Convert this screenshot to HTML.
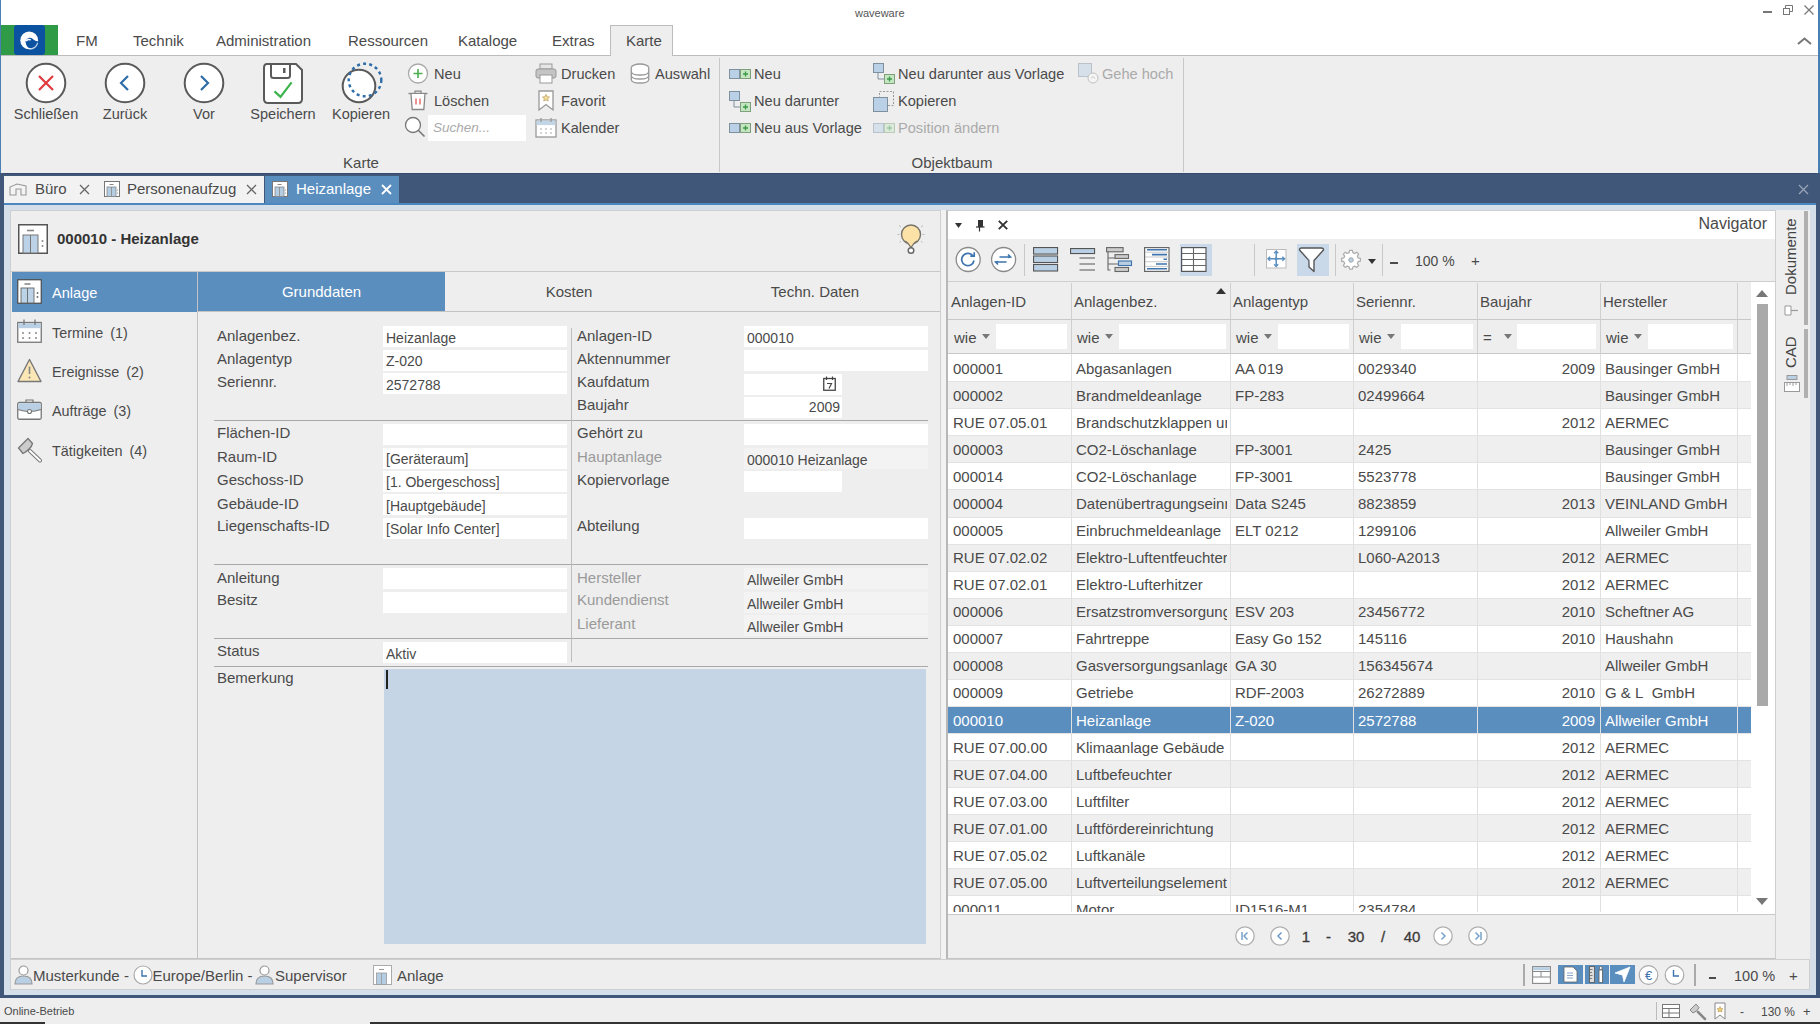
<!DOCTYPE html>
<html><head><meta charset="utf-8">
<style>
*{box-sizing:border-box;margin:0;padding:0}
html,body{width:1820px;height:1024px;overflow:hidden;background:#eeeeee;font-family:"Liberation Sans",sans-serif;color:#444}
.a{position:absolute;white-space:nowrap}
svg.a{overflow:visible}
</style></head><body>

<div class="a" style="left:0px;top:0px;width:1820px;height:25px;background:#fff;"></div>
<div class="a" style="left:0px;top:25px;width:1820px;height:31px;background:#fff;"></div>
<div class="a" style="left:0px;top:55px;width:1820px;height:1px;background:#bcbcbc;"></div>
<div class="a " style="left:855px;top:6.0px;font-size:11px;line-height:14px;color:#555;font-weight:normal;">waveware</div>
<div class="a" style="left:1763px;top:11px;width:9px;height:2px;background:#777;"></div>
<svg class="a" style="left:1783px;top:5px" width="10" height="10" viewBox="0 0 10 10"><rect x="0.5" y="3.5" width="6" height="6" fill="none" stroke="#777"/><path d="M2.5 3.5V0.5h7v6h-3" fill="none" stroke="#777"/></svg>
<svg class="a" style="left:1804px;top:5px" width="10" height="10" viewBox="0 0 10 10"><path d="M0.5 0.5L9.5 9.5M9.5 0.5L0.5 9.5" stroke="#777" stroke-width="1.2"/></svg>
<svg class="a" style="left:1797px;top:37px" width="15" height="8" viewBox="0 0 15 8"><path d="M1 7L7.5 1.5L14 7" fill="none" stroke="#777" stroke-width="2"/></svg>
<div class="a" style="left:0px;top:0px;width:1px;height:173px;background:#4a7fb5;"></div>
<div class="a" style="left:1818px;top:0px;width:2px;height:173px;background:#4a7fb5;"></div>
<div class="a" style="left:1px;top:25px;width:57px;height:30px;background:#2f9b47;"></div>
<div class="a" style="left:14px;top:25px;width:31px;height:30px;background:#0b52a0;border-radius:3px"></div>
<svg class="a" style="left:19px;top:30px" width="22" height="22" viewBox="0 0 22 22"><circle cx="10.2" cy="10.4" r="8.9" fill="#fff"/><path d="M6.5 11.5C7.5 8 11 6.6 13.5 8.8C15.5 10.5 17.5 11.8 19 11.2C18.6 15 15.5 18.2 11.5 18.2C9 18.2 7 16 6.5 11.5Z" fill="#0b52a0"/><path d="M7.2 11.2C8.2 9.5 10 9 11.6 10" fill="none" stroke="#fff" stroke-width="1.6"/><path d="M18.6 13C17.5 16.8 14.5 19 10.5 19.2" fill="none" stroke="#bcd3ea" stroke-width="1.1"/></svg>
<div class="a " style="left:76px;top:31.0px;font-size:15px;line-height:20px;color:#4a4a4a;font-weight:normal;">FM</div>
<div class="a " style="left:133px;top:31.0px;font-size:15px;line-height:20px;color:#4a4a4a;font-weight:normal;">Technik</div>
<div class="a " style="left:216px;top:31.0px;font-size:15px;line-height:20px;color:#4a4a4a;font-weight:normal;">Administration</div>
<div class="a " style="left:348px;top:31.0px;font-size:15px;line-height:20px;color:#4a4a4a;font-weight:normal;">Ressourcen</div>
<div class="a " style="left:458px;top:31.0px;font-size:15px;line-height:20px;color:#4a4a4a;font-weight:normal;">Kataloge</div>
<div class="a " style="left:552px;top:31.0px;font-size:15px;line-height:20px;color:#4a4a4a;font-weight:normal;">Extras</div>
<div class="a" style="left:610px;top:25px;width:63px;height:31px;background:#eeeeee;border:1px solid #bcbcbc;border-bottom:none"></div>
<div class="a " style="left:626px;top:31.0px;font-size:15px;line-height:20px;color:#4a4a4a;font-weight:normal;">Karte</div>
<div class="a" style="left:1px;top:56px;width:1817px;height:116px;background:#eeeeee;"></div>
<div class="a" style="left:719px;top:58px;width:1px;height:114px;background:#c8c8c8;"></div>
<div class="a" style="left:1183px;top:58px;width:1px;height:114px;background:#c8c8c8;"></div>
<div class="a" style="left:261.0px;top:153.0px;width:200px;text-align:center;font-size:15px;line-height:20px;color:#4a4a4a;font-weight:normal;">Karte</div>
<div class="a" style="left:852.0px;top:153.0px;width:200px;text-align:center;font-size:15px;line-height:20px;color:#4a4a4a;font-weight:normal;">Objektbaum</div>
<svg class="a" style="left:25px;top:62px" width="42" height="42" viewBox="0 0 42 42"><circle cx="21" cy="21" r="19.3" fill="#fff" stroke="#5a5a5a" stroke-width="2"/><path d="M14 14L28 28M28 14L14 28" stroke="#e03a3f" stroke-width="2.2"/></svg>
<div class="a" style="left:-54.0px;top:104.0px;width:200px;text-align:center;font-size:14.5px;line-height:20px;color:#4a4a4a;font-weight:normal;">Schließen</div>
<svg class="a" style="left:104px;top:62px" width="42" height="42" viewBox="0 0 42 42"><circle cx="21" cy="21" r="19.3" fill="#fff" stroke="#5a5a5a" stroke-width="2"/><path d="M24 14L17 21L24 28" fill="none" stroke="#2e6da8" stroke-width="2.2"/></svg>
<div class="a" style="left:25.0px;top:104.0px;width:200px;text-align:center;font-size:14.5px;line-height:20px;color:#4a4a4a;font-weight:normal;">Zurück</div>
<svg class="a" style="left:183px;top:62px" width="42" height="42" viewBox="0 0 42 42"><circle cx="21" cy="21" r="19.3" fill="#fff" stroke="#5a5a5a" stroke-width="2"/><path d="M18 14L25 21L18 28" fill="none" stroke="#2e6da8" stroke-width="2.2"/></svg>
<div class="a" style="left:104.0px;top:104.0px;width:200px;text-align:center;font-size:14.5px;line-height:20px;color:#4a4a4a;font-weight:normal;">Vor</div>
<svg class="a" style="left:263px;top:63px" width="40" height="41" viewBox="0 0 40 41"><path d="M4 1H33L39 7V36Q39 40 35 40H5Q1 40 1 36V5Q1 1 4 1Z" fill="#fff" stroke="#5a5a5a" stroke-width="2"/><path d="M8 1.5V12.5Q8 15 10.5 15H24.5Q27 15 27 12.5V1.5" fill="none" stroke="#5a5a5a" stroke-width="2"/><rect x="20" y="5" width="2.5" height="5" fill="#5a5a5a"/><path d="M11.5 28.4L17.5 33.8L28.6 19.4" fill="none" stroke="#3cb44b" stroke-width="2.2"/></svg>
<div class="a" style="left:183.0px;top:104.0px;width:200px;text-align:center;font-size:14.5px;line-height:20px;color:#4a4a4a;font-weight:normal;">Speichern</div>
<svg class="a" style="left:340px;top:62px" width="44" height="44" viewBox="0 0 44 44"><circle cx="19" cy="24" r="16.3" fill="#fff" stroke="#5a5a5a" stroke-width="2"/><circle cx="25" cy="18" r="16.3" fill="none" stroke="#2e6da8" stroke-width="2.4" stroke-dasharray="3 3.2"/></svg>
<div class="a" style="left:261.0px;top:104.0px;width:200px;text-align:center;font-size:14.5px;line-height:20px;color:#4a4a4a;font-weight:normal;">Kopieren</div>
<svg class="a" style="left:407px;top:63px" width="22" height="22" viewBox="0 0 22 22"><circle cx="11" cy="10.5" r="9.5" fill="#fff" stroke="#aaa" stroke-width="1.3"/><path d="M11 6V15M6.5 10.5H15.5" stroke="#4caf50" stroke-width="1.6"/></svg>
<div class="a " style="left:434px;top:64.0px;font-size:14.6px;line-height:20px;color:#4a4a4a;font-weight:normal;">Neu</div>
<svg class="a" style="left:407px;top:90px" width="22" height="21" viewBox="0 0 22 21"><path d="M1.5 3.5H20.5" stroke="#888" stroke-width="1.4"/><path d="M8 3.5V1.2H14V3.5" fill="none" stroke="#888" stroke-width="1.2"/><path d="M4 4L5.2 19.5H16.8L18 4" fill="#fff" stroke="#888" stroke-width="1.3"/><path d="M9 8.5V14.5M13 8.5V14.5" stroke="#e05a5a" stroke-width="1.3"/></svg>
<div class="a " style="left:434px;top:91.0px;font-size:14.6px;line-height:20px;color:#4a4a4a;font-weight:normal;">Löschen</div>
<svg class="a" style="left:404px;top:116px" width="22" height="22" viewBox="0 0 22 22"><circle cx="9" cy="9" r="7.5" fill="#fff" stroke="#777" stroke-width="1.3"/><path d="M14.5 14.5L20.5 20.5" stroke="#777" stroke-width="1.6"/></svg>
<div class="a" style="left:428px;top:115px;width:98px;height:26px;background:#fff;"></div>
<div class="a " style="left:433px;top:118.0px;font-size:13.5px;line-height:20px;color:#aaa;font-weight:normal;font-style:italic">Suchen...</div>
<svg class="a" style="left:535px;top:63px" width="22" height="21" viewBox="0 0 22 21"><rect x="5" y="1" width="12" height="5" fill="#e6e6e6" stroke="#999"/><rect x="1" y="6" width="20" height="9" rx="2" fill="#c4c4c4" stroke="#999"/><rect x="5" y="12" width="12" height="8" fill="#fff" stroke="#999"/></svg>
<div class="a " style="left:561px;top:64.0px;font-size:14.6px;line-height:20px;color:#4a4a4a;font-weight:normal;">Drucken</div>
<svg class="a" style="left:538px;top:90px" width="16" height="21" viewBox="0 0 16 21"><path d="M1 1H15V20L8 14.5L1 20Z" fill="#fff" stroke="#999" stroke-width="1.3"/><path d="M8 4.5L9.1 6.8L11.5 7L9.7 8.6L10.2 11L8 9.8L5.8 11L6.3 8.6L4.5 7L6.9 6.8Z" fill="#f3dca0" stroke="#b89a50" stroke-width="0.7"/></svg>
<div class="a " style="left:561px;top:91.0px;font-size:14.6px;line-height:20px;color:#4a4a4a;font-weight:normal;">Favorit</div>
<svg class="a" style="left:535px;top:117px" width="22" height="21" viewBox="0 0 22 21"><rect x="1" y="3" width="20" height="17" fill="#fff" stroke="#999" stroke-width="1.3"/><rect x="1.6" y="3.6" width="18.8" height="4.5" fill="#c2d6e8"/><path d="M6 1V5M16 1V5" stroke="#999" stroke-width="1.3"/><path d="M5 12h2M10 12h2M15 12h2M5 16h2M10 16h2M15 16h2" stroke="#aaa" stroke-width="1.2"/></svg>
<div class="a " style="left:561px;top:118.0px;font-size:14.6px;line-height:20px;color:#4a4a4a;font-weight:normal;">Kalender</div>
<svg class="a" style="left:630px;top:63px" width="20" height="21" viewBox="0 0 20 21"><ellipse cx="10" cy="4.5" rx="8.7" ry="3.5" fill="#fff" stroke="#999" stroke-width="1.3"/><path d="M1.3 4.5V16.5C1.3 18.5 5 20 10 20S18.7 18.5 18.7 16.5V4.5" fill="#fff" stroke="#999" stroke-width="1.3"/><path d="M1.3 8.5C1.3 10.5 5 12 10 12S18.7 10.5 18.7 8.5M1.3 12.5C1.3 14.5 5 16 10 16S18.7 14.5 18.7 12.5" fill="none" stroke="#999" stroke-width="1.3"/></svg>
<div class="a " style="left:655px;top:64.0px;font-size:14.6px;line-height:20px;color:#4a4a4a;font-weight:normal;">Auswahl</div>
<svg class="a" style="left:729px;top:68px" width="22" height="12" viewBox="0 0 22 12"><g opacity="1.0"><rect x="0.5" y="1.5" width="10" height="9" fill="#b9d0e6" stroke="#7e8f9e"/><rect x="11.5" y="1.5" width="10" height="9" fill="#c6e6c3" stroke="#7ea07a"/><path d="M16.5 3.5V8.5M14 6H19" stroke="#3a9a45" stroke-width="1.3"/></g></svg>
<div class="a " style="left:754px;top:64.0px;font-size:14.6px;line-height:20px;color:#4a4a4a;font-weight:normal;">Neu</div>
<svg class="a" style="left:729px;top:91px" width="22" height="22" viewBox="0 0 22 22"><g opacity="1.0"><rect x="0.5" y="0.5" width="10" height="9" fill="#b9d0e6" stroke="#7e8f9e"/><path d="M5 10V16H11" fill="none" stroke="#7e8f9e"/><rect x="11.5" y="11.5" width="10" height="9" fill="#c6e6c3" stroke="#7ea07a"/><path d="M16.5 13.5V18.5M14 16H19" stroke="#3a9a45" stroke-width="1.3"/></g></svg>
<div class="a " style="left:754px;top:91.0px;font-size:14.6px;line-height:20px;color:#4a4a4a;font-weight:normal;">Neu darunter</div>
<svg class="a" style="left:729px;top:122px" width="22" height="12" viewBox="0 0 22 12"><g opacity="1.0"><rect x="0.5" y="1.5" width="10" height="9" fill="#b9d0e6" stroke="#7e8f9e"/><rect x="11.5" y="1.5" width="10" height="9" fill="#c6e6c3" stroke="#7ea07a"/><path d="M16.5 3.5V8.5M14 6H19" stroke="#3a9a45" stroke-width="1.3"/></g></svg>
<div class="a " style="left:754px;top:118.0px;font-size:14.6px;line-height:20px;color:#4a4a4a;font-weight:normal;">Neu aus Vorlage</div>
<svg class="a" style="left:873px;top:63px" width="22" height="22" viewBox="0 0 22 22"><g opacity="1.0"><rect x="0.5" y="0.5" width="10" height="9" fill="#b9d0e6" stroke="#7e8f9e"/><path d="M5 10V16H11" fill="none" stroke="#7e8f9e"/><rect x="11.5" y="11.5" width="10" height="9" fill="#c6e6c3" stroke="#7ea07a"/><path d="M16.5 13.5V18.5M14 16H19" stroke="#3a9a45" stroke-width="1.3"/></g></svg>
<div class="a " style="left:898px;top:64.0px;font-size:14.6px;line-height:20px;color:#4a4a4a;font-weight:normal;">Neu darunter aus Vorlage</div>
<svg class="a" style="left:873px;top:91px" width="22" height="21" viewBox="0 0 22 21"><rect x="6.5" y="0.5" width="14" height="14" fill="none" stroke="#999" stroke-dasharray="2 1.5"/><rect x="0.5" y="6.5" width="14" height="14" fill="#b9d0e6" stroke="#7e8f9e"/></svg>
<div class="a " style="left:898px;top:91.0px;font-size:14.6px;line-height:20px;color:#4a4a4a;font-weight:normal;">Kopieren</div>
<svg class="a" style="left:873px;top:122px" width="22" height="12" viewBox="0 0 22 12"><g opacity="0.45"><rect x="0.5" y="1.5" width="10" height="9" fill="#b9d0e6" stroke="#7e8f9e"/><rect x="11.5" y="1.5" width="10" height="9" fill="#c6e6c3" stroke="#7ea07a"/><path d="M16.5 3.5V8.5M14 6H19" stroke="#3a9a45" stroke-width="1.3"/></g></svg>
<div class="a " style="left:898px;top:118.0px;font-size:14.6px;line-height:20px;color:#aaa;font-weight:normal;">Position ändern</div>
<svg class="a" style="left:1078px;top:63px" width="22" height="22" viewBox="0 0 22 22"><g opacity="0.45"><rect x="0.5" y="0.5" width="13" height="13" fill="#b9d0e6" stroke="#7e8f9e"/><circle cx="15" cy="15" r="5" fill="#fff" stroke="#888"/><path d="M13 15.5L15 13.5L17 15.5" fill="none" stroke="#888"/></g></svg>
<div class="a " style="left:1102px;top:64.0px;font-size:14.6px;line-height:20px;color:#aaa;font-weight:normal;">Gehe hoch</div>
<div class="a" style="left:0px;top:173px;width:1820px;height:30px;background:#41577a;"></div>
<div class="a" style="left:0px;top:173px;width:1820px;height:1px;background:#34496b;"></div>
<div class="a" style="left:0px;top:203px;width:1820px;height:2px;background:#4d87bf;"></div>
<div class="a" style="left:0px;top:205px;width:1820px;height:5px;background:#d5dfe9;"></div>
<div class="a" style="left:4px;top:176px;width:260px;height:27px;background:#f2f2f2;"></div>
<svg class="a" style="left:9px;top:183px" width="18" height="13" viewBox="0 0 18 13"><path d="M1 12V4L8 1L17 3V12H12V6H7V12Z" fill="#f4f4f4" stroke="#999" stroke-width="1.1"/></svg>
<div class="a " style="left:35px;top:179.0px;font-size:15px;line-height:20px;color:#4a4a4a;font-weight:normal;">Büro</div>
<svg class="a" style="left:79px;top:184px" width="11" height="11" viewBox="0 0 11 11"><path d="M1 1L10 10M10 1L1 10" stroke="#666" stroke-width="1.3"/></svg>
<svg class="a" style="left:104px;top:181px" width="16" height="16" viewBox="0 0 16 16"><rect x="0.5" y="0.5" width="15" height="15" fill="#fff" stroke="#777"/><rect x="3" y="6" width="9" height="9.5" fill="#b5cde2" stroke="#888" stroke-width="0.8"/><path d="M7.5 6V15.5" stroke="#888" stroke-width="0.8"/><path d="M5.5 3.5H9.5" stroke="#888"/><circle cx="13.5" cy="9" r="0.6" fill="#888"/><circle cx="13.5" cy="12" r="0.6" fill="#888"/></svg>
<div class="a " style="left:127px;top:179.0px;font-size:15px;line-height:20px;color:#4a4a4a;font-weight:normal;">Personenaufzug</div>
<svg class="a" style="left:246px;top:184px" width="11" height="11" viewBox="0 0 11 11"><path d="M1 1L10 10M10 1L1 10" stroke="#666" stroke-width="1.3"/></svg>
<div class="a" style="left:265px;top:176px;width:134px;height:27px;background:#5a8ebf;"></div>
<svg class="a" style="left:272px;top:181px" width="16" height="16" viewBox="0 0 16 16"><rect x="0.5" y="0.5" width="15" height="15" fill="#fff" stroke="#777"/><rect x="3" y="6" width="9" height="9.5" fill="#b5cde2" stroke="#888" stroke-width="0.8"/><path d="M7.5 6V15.5" stroke="#888" stroke-width="0.8"/><path d="M5.5 3.5H9.5" stroke="#888"/><circle cx="13.5" cy="9" r="0.6" fill="#888"/><circle cx="13.5" cy="12" r="0.6" fill="#888"/></svg>
<div class="a " style="left:296px;top:179.0px;font-size:15px;line-height:20px;color:#fff;font-weight:normal;">Heizanlage</div>
<svg class="a" style="left:381px;top:184px" width="11" height="11" viewBox="0 0 11 11"><path d="M1 1L10 10M10 1L1 10" stroke="#fff" stroke-width="1.8"/></svg>
<svg class="a" style="left:1798px;top:184px" width="11" height="11" viewBox="0 0 11 11"><path d="M1 1L10 10M10 1L1 10" stroke="#9aa6b8" stroke-width="1.2"/></svg>
<div class="a" style="left:0px;top:173px;width:4px;height:825px;background:#41577a;"></div>
<div class="a" style="left:1816px;top:173px;width:4px;height:825px;background:#41577a;"></div>
<div class="a" style="left:4px;top:210px;width:6px;height:785px;background:#d5dfe9;"></div>
<div class="a" style="left:1810px;top:210px;width:6px;height:785px;background:#d5dfe9;"></div>
<div class="a" style="left:10px;top:210px;width:931px;height:750px;background:#eeeeee;border:1px solid #cfcfcf;border-bottom:2px solid #c4c4c4"></div>
<svg class="a" style="left:18px;top:224px" width="30" height="30" viewBox="0 0 30 30"><rect x="0.75" y="0.75" width="28.5" height="28.5" fill="#fff" stroke="#555" stroke-width="1.5"/><rect x="5" y="11" width="15" height="18" fill="#bcd2e6" stroke="#777" stroke-width="1"/><path d="M12.5 11V29" stroke="#777" stroke-width="1"/><path d="M9 6.5H16" stroke="#888" stroke-width="1.6"/><circle cx="24.5" cy="17" r="1" fill="#888"/><circle cx="24.5" cy="22" r="1" fill="#888"/></svg>
<div class="a " style="left:57px;top:229.0px;font-size:15px;line-height:20px;color:#333;font-weight:bold;">000010 - Heizanlage</div>
<svg class="a" style="left:896px;top:222px" width="30" height="34" viewBox="0 0 30 34"><circle cx="15" cy="12.5" r="9.5" fill="#fde2a8" stroke="#77736a" stroke-width="1.4"/><path d="M10 19.5L15 25L20 19.5" fill="#fde2a8" stroke="none"/><path d="M9.3 19Q13 21.5 15 25.5Q17 21.5 20.7 19" fill="none" stroke="#77736a" stroke-width="1.3"/><circle cx="15" cy="28.5" r="2.8" fill="#fff" stroke="#666" stroke-width="1.4"/><g stroke="#bbb" stroke-width="1"><path d="M3 3.5L5 5M27 3.5L25 5M1.5 12.5H3.5M26.5 12.5H28.5M3.5 20.5L5 19M26.5 20.5L25 19"/></g></svg>
<div class="a" style="left:11px;top:271px;width:929px;height:1px;background:#c8c8c8;"></div>
<div class="a" style="left:12px;top:272px;width:185px;height:40px;background:#5a8ebf;"></div>
<div class="a" style="left:197px;top:272px;width:1px;height:686px;background:#c3c3c3;"></div>
<svg class="a" style="left:17px;top:279px" width="25" height="25" viewBox="0 0 25 25"><rect x="0.75" y="0.75" width="23.5" height="23.5" fill="#fff" stroke="#4a4a4a" stroke-width="1.2"/><rect x="4" y="9" width="13" height="15" fill="#bcd2e6" stroke="#666" stroke-width="0.9"/><path d="M10.5 9V24" stroke="#666" stroke-width="0.9"/><path d="M7.5 5H13.5" stroke="#777" stroke-width="1.4"/><circle cx="20.5" cy="14" r="0.9" fill="#666"/><circle cx="20.5" cy="18" r="0.9" fill="#666"/></svg>
<div class="a " style="left:52px;top:283.0px;font-size:14.6px;line-height:20px;color:#fff;font-weight:normal;">Anlage</div>
<svg class="a" style="left:17px;top:319px" width="25" height="24" viewBox="0 0 25 24"><rect x="0.75" y="3.5" width="23.5" height="19.75" fill="#fff" stroke="#777" stroke-width="1.3"/><rect x="1.4" y="4.2" width="22.2" height="5" fill="#b9cfe3"/><path d="M7 0.5V6M18 0.5V6" stroke="#777" stroke-width="1.3"/><g fill="#888"><circle cx="6" cy="14" r="1"/><circle cx="12.5" cy="14" r="1"/><circle cx="19" cy="14" r="1"/><circle cx="6" cy="19" r="1"/><circle cx="12.5" cy="19" r="1"/><circle cx="19" cy="19" r="1"/></g></svg>
<div class="a " style="left:52px;top:323.0px;font-size:14.4px;line-height:20px;color:#4a4a4a;font-weight:normal;">Termine<span style="margin-left:3px"> (1)</span></div>
<svg class="a" style="left:17px;top:358px" width="25" height="25" viewBox="0 0 25 25"><path d="M12.5 1.5L24 23.5H1Z" fill="#fbe7b5" stroke="#777" stroke-width="1.4" stroke-linejoin="round"/><path d="M12.5 8.5V16" stroke="#888" stroke-width="1.6"/><circle cx="12.5" cy="19.5" r="1" fill="#888"/></svg>
<div class="a " style="left:52px;top:362.0px;font-size:14.4px;line-height:20px;color:#4a4a4a;font-weight:normal;">Ereignisse<span style="margin-left:3px"> (2)</span></div>
<svg class="a" style="left:17px;top:399px" width="25" height="21" viewBox="0 0 25 21"><rect x="0.75" y="3.5" width="23.5" height="16.75" rx="1.5" fill="#fff" stroke="#777" stroke-width="1.3"/><path d="M1.3 4.2H23.6V10.5Q12.5 14.5 1.3 10.5Z" fill="#b9cfe3"/><path d="M1 10.5Q12.5 14.5 24 10.5" fill="none" stroke="#777" stroke-width="1.2"/><path d="M9 3.5V1H16V3.5" fill="none" stroke="#777" stroke-width="1.2"/><circle cx="12.5" cy="12.5" r="2" fill="#fff" stroke="#777" stroke-width="1.1"/></svg>
<div class="a " style="left:52px;top:401.0px;font-size:14.4px;line-height:20px;color:#4a4a4a;font-weight:normal;">Aufträge<span style="margin-left:3px"> (3)</span></div>
<svg class="a" style="left:17px;top:437px" width="25" height="25" viewBox="0 0 25 25"><path d="M13 14L23 23.5" stroke="#777" stroke-width="4" stroke-linecap="round"/><path d="M13 14L23 23.5" stroke="#fff" stroke-width="2" stroke-linecap="round"/><path d="M1.5 11L11 1.5L15.5 6.5Q14 12 6 16.5Z" fill="#ccc" stroke="#777" stroke-width="1.3" stroke-linejoin="round"/></svg>
<div class="a " style="left:52px;top:441.0px;font-size:14.4px;line-height:20px;color:#4a4a4a;font-weight:normal;">Tätigkeiten<span style="margin-left:3px"> (4)</span></div>
<div class="a" style="left:198px;top:272px;width:247px;height:40px;background:#5a8ebf;"></div>
<div class="a" style="left:198px;top:311px;width:742px;height:1px;background:#c3c3c3;"></div>
<div class="a" style="left:221.5px;top:282.0px;width:200px;text-align:center;font-size:15px;line-height:20px;color:#fff;font-weight:normal;">Grunddaten</div>
<div class="a" style="left:469.0px;top:282.0px;width:200px;text-align:center;font-size:15px;line-height:20px;color:#4a4a4a;font-weight:normal;">Kosten</div>
<div class="a" style="left:715.0px;top:282.0px;width:200px;text-align:center;font-size:15px;line-height:20px;color:#4a4a4a;font-weight:normal;">Techn. Daten</div>
<div class="a" style="left:214px;top:420px;width:714px;height:1px;background:#a9a9a9;"></div>
<div class="a" style="left:214px;top:564px;width:714px;height:1px;background:#a9a9a9;"></div>
<div class="a" style="left:214px;top:638px;width:714px;height:1px;background:#a9a9a9;"></div>
<div class="a" style="left:214px;top:666px;width:714px;height:1px;background:#a9a9a9;"></div>
<div class="a" style="left:571px;top:328px;width:1px;height:334px;background:#bdbdbd;"></div>
<div class="a " style="left:217px;top:325.8px;font-size:15px;line-height:20px;color:#4a4a4a;font-weight:normal;">Anlagenbez.</div>
<div class="a" style="left:383px;top:326px;width:184px;height:21px;background:#fff;"></div>
<div class="a " style="left:386px;top:327.5px;font-size:14px;line-height:20px;color:#4a4a4a;font-weight:normal;">Heizanlage</div>
<div class="a " style="left:217px;top:349.3px;font-size:15px;line-height:20px;color:#4a4a4a;font-weight:normal;">Anlagentyp</div>
<div class="a" style="left:383px;top:350px;width:184px;height:21px;background:#fff;"></div>
<div class="a " style="left:386px;top:351.2px;font-size:14px;line-height:20px;color:#4a4a4a;font-weight:normal;">Z-020</div>
<div class="a " style="left:217px;top:372.2px;font-size:15px;line-height:20px;color:#4a4a4a;font-weight:normal;">Seriennr.</div>
<div class="a" style="left:383px;top:373px;width:184px;height:21px;background:#fff;"></div>
<div class="a " style="left:386px;top:374.7px;font-size:14px;line-height:20px;color:#4a4a4a;font-weight:normal;">2572788</div>
<div class="a " style="left:217px;top:423.3px;font-size:15px;line-height:20px;color:#4a4a4a;font-weight:normal;">Flächen-ID</div>
<div class="a" style="left:383px;top:424px;width:184px;height:21px;background:#fff;"></div>
<div class="a " style="left:217px;top:446.6px;font-size:15px;line-height:20px;color:#4a4a4a;font-weight:normal;">Raum-ID</div>
<div class="a" style="left:383px;top:448px;width:184px;height:21px;background:#fff;"></div>
<div class="a " style="left:386px;top:449.2px;font-size:14px;line-height:20px;color:#4a4a4a;font-weight:normal;">[Geräteraum]</div>
<div class="a " style="left:217px;top:470.0px;font-size:15px;line-height:20px;color:#4a4a4a;font-weight:normal;">Geschoss-ID</div>
<div class="a" style="left:383px;top:471px;width:184px;height:21px;background:#fff;"></div>
<div class="a " style="left:386px;top:472.3px;font-size:14px;line-height:20px;color:#4a4a4a;font-weight:normal;">[1. Obergeschoss]</div>
<div class="a " style="left:217px;top:493.5px;font-size:15px;line-height:20px;color:#4a4a4a;font-weight:normal;">Gebäude-ID</div>
<div class="a" style="left:383px;top:494px;width:184px;height:21px;background:#fff;"></div>
<div class="a " style="left:386px;top:495.5px;font-size:14px;line-height:20px;color:#4a4a4a;font-weight:normal;">[Hauptgebäude]</div>
<div class="a " style="left:217px;top:516.4px;font-size:15px;line-height:20px;color:#4a4a4a;font-weight:normal;">Liegenschafts-ID</div>
<div class="a" style="left:383px;top:518px;width:184px;height:21px;background:#fff;"></div>
<div class="a " style="left:386px;top:519.3px;font-size:14px;line-height:20px;color:#4a4a4a;font-weight:normal;">[Solar Info Center]</div>
<div class="a " style="left:217px;top:567.6px;font-size:15px;line-height:20px;color:#4a4a4a;font-weight:normal;">Anleitung</div>
<div class="a" style="left:383px;top:568px;width:184px;height:21px;background:#fff;"></div>
<div class="a " style="left:217px;top:590.0px;font-size:15px;line-height:20px;color:#4a4a4a;font-weight:normal;">Besitz</div>
<div class="a" style="left:383px;top:592px;width:184px;height:21px;background:#fff;"></div>
<div class="a " style="left:217px;top:641.3px;font-size:15px;line-height:20px;color:#4a4a4a;font-weight:normal;">Status</div>
<div class="a" style="left:383px;top:642px;width:184px;height:21px;background:#fff;"></div>
<div class="a " style="left:386px;top:643.5px;font-size:14px;line-height:20px;color:#4a4a4a;font-weight:normal;">Aktiv</div>
<div class="a " style="left:577px;top:325.7px;font-size:15px;line-height:20px;color:#4a4a4a;font-weight:normal;">Anlagen-ID</div>
<div class="a" style="left:744px;top:326px;width:184px;height:21px;background:#fff;"></div>
<div class="a " style="left:747px;top:327.5px;font-size:14px;line-height:20px;color:#4a4a4a;font-weight:normal;">000010</div>
<div class="a " style="left:577px;top:349.3px;font-size:15px;line-height:20px;color:#4a4a4a;font-weight:normal;">Aktennummer</div>
<div class="a" style="left:744px;top:350px;width:184px;height:21px;background:#fff;"></div>
<div class="a " style="left:577px;top:372.3px;font-size:15px;line-height:20px;color:#4a4a4a;font-weight:normal;">Kaufdatum</div>
<div class="a" style="left:744px;top:374px;width:98px;height:21px;background:#fff;"></div>
<div class="a " style="left:577px;top:395.2px;font-size:15px;line-height:20px;color:#4a4a4a;font-weight:normal;">Baujahr</div>
<div class="a" style="left:744px;top:397px;width:98px;height:21px;background:#fff;"></div>
<div class="a " style="left:577px;top:423.3px;font-size:15px;line-height:20px;color:#4a4a4a;font-weight:normal;">Gehört zu</div>
<div class="a" style="left:744px;top:424px;width:184px;height:21px;background:#fff;"></div>
<div class="a " style="left:577px;top:446.6px;font-size:15px;line-height:20px;color:#9a9a9a;font-weight:normal;">Hauptanlage</div>
<div class="a" style="left:744px;top:448px;width:184px;height:21px;background:#f3f3f3;"></div>
<div class="a " style="left:747px;top:449.5px;font-size:14px;line-height:20px;color:#4a4a4a;font-weight:normal;">000010 Heizanlage</div>
<div class="a " style="left:577px;top:470.0px;font-size:15px;line-height:20px;color:#4a4a4a;font-weight:normal;">Kopiervorlage</div>
<div class="a" style="left:744px;top:471px;width:98px;height:21px;background:#fff;"></div>
<div class="a " style="left:577px;top:516.4px;font-size:15px;line-height:20px;color:#4a4a4a;font-weight:normal;">Abteilung</div>
<div class="a" style="left:744px;top:518px;width:184px;height:21px;background:#fff;"></div>
<div class="a " style="left:577px;top:567.6px;font-size:15px;line-height:20px;color:#9a9a9a;font-weight:normal;">Hersteller</div>
<div class="a" style="left:744px;top:568px;width:184px;height:21px;background:#f3f3f3;"></div>
<div class="a " style="left:747px;top:569.5px;font-size:14px;line-height:20px;color:#4a4a4a;font-weight:normal;">Allweiler GmbH</div>
<div class="a " style="left:577px;top:590.0px;font-size:15px;line-height:20px;color:#9a9a9a;font-weight:normal;">Kundendienst</div>
<div class="a" style="left:744px;top:592px;width:184px;height:21px;background:#f3f3f3;"></div>
<div class="a " style="left:747px;top:593.5px;font-size:14px;line-height:20px;color:#4a4a4a;font-weight:normal;">Allweiler GmbH</div>
<div class="a " style="left:577px;top:614.0px;font-size:15px;line-height:20px;color:#9a9a9a;font-weight:normal;">Lieferant</div>
<div class="a" style="left:744px;top:615px;width:184px;height:21px;background:#f3f3f3;"></div>
<div class="a " style="left:747px;top:616.5px;font-size:14px;line-height:20px;color:#4a4a4a;font-weight:normal;">Allweiler GmbH</div>
<div class="a" style="left:640px;top:397.0px;width:200px;text-align:right;font-size:14px;line-height:20px;color:#4a4a4a;">2009</div>
<svg class="a" style="left:823px;top:376px" width="13" height="15" viewBox="0 0 13 15"><rect x="0.75" y="2.5" width="11.5" height="11.75" fill="#fff" stroke="#444" stroke-width="1.3"/><path d="M3.5 0.5V4M9.5 0.5V4" stroke="#444" stroke-width="1.2"/><path d="M4 7.5H8.5L6 12.5" fill="none" stroke="#444" stroke-width="1.2"/></svg>
<div class="a " style="left:217px;top:668.0px;font-size:15px;line-height:20px;color:#4a4a4a;font-weight:normal;">Bemerkung</div>
<div class="a" style="left:384px;top:669px;width:542px;height:275px;background:#c5d5e5;"></div>
<div class="a" style="left:386px;top:670px;width:2px;height:19px;background:#222;"></div>
<div class="a" style="left:941px;top:210px;width:6px;height:750px;background:#f2f2f2;"></div>
<div class="a" style="left:946px;top:210px;width:830px;height:750px;background:#eeeeee;border:1px solid #cfcfcf;border-left:2px solid #b8b8b8;border-bottom:2px solid #c4c4c4"></div>
<div class="a" style="left:948px;top:211px;width:827px;height:28px;background:#fff;"></div>
<svg class="a" style="left:955px;top:223px" width="7" height="5" viewBox="0 0 7 5"><path d="M0 0H7L3.5 5Z" fill="#333"/></svg>
<svg class="a" style="left:975px;top:219px" width="10" height="13" viewBox="0 0 10 13"><path d="M3 1H8V8H3Z" fill="#333"/><path d="M1 8H9.5" stroke="#333" stroke-width="1.2"/><path d="M4.5 8V12.5" stroke="#333" stroke-width="1.2"/></svg>
<svg class="a" style="left:998px;top:220px" width="10" height="10" viewBox="0 0 10 10"><path d="M0.8 0.8L9.2 9.2M9.2 0.8L0.8 9.2" stroke="#333" stroke-width="1.9"/></svg>
<div class="a" style="left:1567px;top:214.0px;width:200px;text-align:right;font-size:16px;line-height:20px;color:#4a4a4a;">Navigator</div>
<svg class="a" style="left:955px;top:247px" width="27" height="26" viewBox="0 0 27 26"><circle cx="13.2" cy="12.5" r="12" fill="#fff" stroke="#8a8a8a" stroke-width="1.3"/><path d="M18.2 9.3A6.2 6.2 0 1 0 19 13.5" fill="none" stroke="#3d74ad" stroke-width="1.7"/><path d="M15.3 9.2H19.2V5.3" fill="none" stroke="#3d74ad" stroke-width="1.7"/></svg>
<svg class="a" style="left:990px;top:247px" width="27" height="26" viewBox="0 0 27 26"><circle cx="13.6" cy="12.5" r="12" fill="#fff" stroke="#8a8a8a" stroke-width="1.3"/><path d="M9.5 10H20.5M18 7.5L20.5 10L18 10.5" fill="none" stroke="#3d74ad" stroke-width="1.6"/><path d="M16.5 15H5.5M8 17.5L5.5 15L8 14.5" fill="none" stroke="#3d74ad" stroke-width="1.6"/></svg>
<div class="a" style="left:1024px;top:244px;width:1px;height:32px;background:#c8c8c8;"></div>
<svg class="a" style="left:1033px;top:247px" width="26" height="25" viewBox="0 0 26 25"><g fill="#b9cfe3" stroke="#555" stroke-width="1.1"><rect x="0.55" y="0.55" width="24" height="6.5"/><rect x="0.55" y="9" width="24" height="6.5"/><rect x="0.55" y="17.5" width="24" height="6.5"/></g></svg>
<svg class="a" style="left:1070px;top:248px" width="26" height="24" viewBox="0 0 26 24"><rect x="0.55" y="0.55" width="24" height="5" fill="#b9cfe3" stroke="#555" stroke-width="1.1"/><path d="M9.5 10H25M9.5 16H25M9.5 22H25" stroke="#888" stroke-width="1.3"/></svg>
<svg class="a" style="left:1106px;top:247px" width="27" height="26" viewBox="0 0 27 26"><path d="M2 5V23H4.5M2 11H9M2 17H12" fill="none" stroke="#666" stroke-width="1.1"/><g stroke="#666" stroke-width="1.1" fill="#ccc"><rect x="0.6" y="0.6" width="16.5" height="4.2"/><rect x="9" y="7.6" width="13.5" height="3.8"/><rect x="9" y="20.5" width="13.5" height="4"/></g><rect x="12.5" y="14" width="13" height="4.5" fill="#b9cfe3" stroke="#3d74ad" stroke-width="1.1"/></svg>
<svg class="a" style="left:1144px;top:247px" width="26" height="25" viewBox="0 0 26 25"><rect x="0.6" y="0.6" width="24.4" height="23.8" fill="#fff" stroke="#666" stroke-width="1.2"/><path d="M1 5.2H25M1 10H25M1 14.7H25M1 19.4H25" stroke="#bbb" stroke-width="0.8"/><path d="M3 2.8H23M8 7.6H23M19.5 12.3H23M12 17H23M3 21.8H23" stroke="#3d74ad" stroke-width="1.6"/></svg>
<div class="a" style="left:1180px;top:244px;width:32px;height:32px;background:#c9d9ea;"></div>
<svg class="a" style="left:1181px;top:247px" width="26" height="25" viewBox="0 0 26 25"><rect x="0.6" y="0.6" width="24.4" height="23.8" fill="#fff" stroke="#555" stroke-width="1.2"/><path d="M1 6.5H25M1 12.5H25M1 18.5H25M12.5 1V24" stroke="#666" stroke-width="1.1"/></svg>
<div class="a" style="left:1254px;top:244px;width:1px;height:32px;background:#c8c8c8;"></div>
<svg class="a" style="left:1266px;top:249px" width="21" height="20" viewBox="0 0 21 20"><rect x="0.5" y="0.5" width="19.5" height="18.5" fill="#fff" stroke="#bbb"/><path d="M10.2 2V17.5M2 9.7H18.5" stroke="#5a8ebf" stroke-width="1.5"/><path d="M8.2 4.2L10.2 2L12.2 4.2M8.2 15.3L10.2 17.5L12.2 15.3M4.2 7.7L2 9.7L4.2 11.7M16.3 7.7L18.5 9.7L16.3 11.7" fill="none" stroke="#5a8ebf" stroke-width="1.4"/><circle cx="10.2" cy="9.7" r="1.5" fill="#5a8ebf"/></svg>
<div class="a" style="left:1297px;top:244px;width:32px;height:32px;background:#c9d9ea;"></div>
<svg class="a" style="left:1298px;top:247px" width="27" height="25" viewBox="0 0 27 25"><path d="M1.5 3Q1.5 1 3.5 1H23.5Q25.5 1 25.5 3L16 13.5V24.5L11 20V13.5Z" fill="#fff" stroke="#555" stroke-width="1.4" stroke-linejoin="round"/><path d="M3 2.5L11 13V19.5L11.5 12.5Z" fill="#c9d9ea"/></svg>
<div class="a" style="left:1335px;top:244px;width:1px;height:32px;background:#c8c8c8;"></div>
<svg class="a" style="left:1341px;top:250px" width="20" height="20" viewBox="0 0 20 20"><g transform="translate(10 10)"><path d="M-1.6 -9.2H1.6L2.2 -6.6L4.4 -5.6L6.7 -7.1L8.9 -4.9L7.4 -2.6L8.3 -0.4L10.9 0.1V3.3L8.3 3.9L7.4 6.1L8.9 8.4L6.7 10.6L4.4 9.1L2.2 10.1L1.6 12.7H-1.6L-2.2 10.1L-4.4 9.1L-6.7 10.6L-8.9 8.4L-7.4 6.1L-8.3 3.9L-10.9 3.3V0.1L-8.3 -0.4L-7.4 -2.6L-8.9 -4.9L-6.7 -7.1L-4.4 -5.6L-2.2 -6.6Z" transform="translate(0 -1.7) scale(0.86)" fill="#fff" stroke="#aaa" stroke-width="1.4" stroke-linejoin="round"/><circle cx="0" cy="0" r="2.3" fill="#b9cfe3" stroke="#999" stroke-width="0.8"/></g></svg>
<svg class="a" style="left:1368px;top:259px" width="8" height="5" viewBox="0 0 8 5"><path d="M0 0H8L4 5Z" fill="#333"/></svg>
<div class="a" style="left:1382px;top:244px;width:1px;height:32px;background:#c8c8c8;"></div>
<div class="a" style="left:1390px;top:262px;width:8px;height:1.5px;background:#4a4a4a;"></div>
<div class="a " style="left:1415px;top:250.5px;font-size:14px;line-height:20px;color:#4a4a4a;font-weight:normal;">100 %</div>
<div class="a " style="left:1471px;top:251.0px;font-size:15px;line-height:20px;color:#4a4a4a;font-weight:normal;">+</div>
<div class="a" style="left:948px;top:281px;width:827px;height:1px;background:#cfcfcf;"></div>
<div class="a" style="left:948px;top:282px;width:803px;height:72px;background:#eeeeee;"></div>
<div class="a" style="left:948px;top:319px;width:803px;height:1px;background:#c8c8c8;"></div>
<div class="a" style="left:948px;top:353px;width:803px;height:1px;background:#c8c8c8;"></div>
<div class="a" style="left:1071px;top:283px;width:1px;height:71px;background:#cfcfcf;"></div>
<div class="a" style="left:1230px;top:283px;width:1px;height:71px;background:#cfcfcf;"></div>
<div class="a" style="left:1353px;top:283px;width:1px;height:71px;background:#cfcfcf;"></div>
<div class="a" style="left:1477px;top:283px;width:1px;height:71px;background:#cfcfcf;"></div>
<div class="a" style="left:1600px;top:283px;width:1px;height:71px;background:#cfcfcf;"></div>
<div class="a" style="left:1737px;top:283px;width:1px;height:71px;background:#cfcfcf;"></div>
<div class="a" style="left:1751px;top:283px;width:1px;height:71px;background:#cfcfcf;"></div>
<div class="a " style="left:951px;top:291.5px;font-size:15px;line-height:20px;color:#4a4a4a;font-weight:normal;">Anlagen-ID</div>
<div class="a " style="left:1074px;top:291.5px;font-size:15px;line-height:20px;color:#4a4a4a;font-weight:normal;">Anlagenbez.</div>
<div class="a " style="left:1233px;top:291.5px;font-size:15px;line-height:20px;color:#4a4a4a;font-weight:normal;">Anlagentyp</div>
<div class="a " style="left:1356px;top:291.5px;font-size:15px;line-height:20px;color:#4a4a4a;font-weight:normal;">Seriennr.</div>
<div class="a " style="left:1480px;top:291.5px;font-size:15px;line-height:20px;color:#4a4a4a;font-weight:normal;">Baujahr</div>
<div class="a " style="left:1603px;top:291.5px;font-size:15px;line-height:20px;color:#4a4a4a;font-weight:normal;">Hersteller</div>
<svg class="a" style="left:1216px;top:288px" width="10" height="6" viewBox="0 0 10 6"><path d="M0 6H10L5 0Z" fill="#333"/></svg>
<div class="a " style="left:954px;top:328.0px;font-size:15px;line-height:20px;color:#4a4a4a;font-weight:normal;">wie</div>
<svg class="a" style="left:982px;top:334px" width="8" height="5" viewBox="0 0 8 5"><path d="M0 0H8L4 5Z" fill="#777"/></svg>
<div class="a" style="left:996px;top:324px;width:71px;height:25px;background:#fff;"></div>
<div class="a " style="left:1077px;top:328.0px;font-size:15px;line-height:20px;color:#4a4a4a;font-weight:normal;">wie</div>
<svg class="a" style="left:1105px;top:334px" width="8" height="5" viewBox="0 0 8 5"><path d="M0 0H8L4 5Z" fill="#777"/></svg>
<div class="a" style="left:1119px;top:324px;width:107px;height:25px;background:#fff;"></div>
<div class="a " style="left:1236px;top:328.0px;font-size:15px;line-height:20px;color:#4a4a4a;font-weight:normal;">wie</div>
<svg class="a" style="left:1264px;top:334px" width="8" height="5" viewBox="0 0 8 5"><path d="M0 0H8L4 5Z" fill="#777"/></svg>
<div class="a" style="left:1278px;top:324px;width:71px;height:25px;background:#fff;"></div>
<div class="a " style="left:1359px;top:328.0px;font-size:15px;line-height:20px;color:#4a4a4a;font-weight:normal;">wie</div>
<svg class="a" style="left:1387px;top:334px" width="8" height="5" viewBox="0 0 8 5"><path d="M0 0H8L4 5Z" fill="#777"/></svg>
<div class="a" style="left:1401px;top:324px;width:72px;height:25px;background:#fff;"></div>
<div class="a " style="left:1483px;top:328.0px;font-size:15px;line-height:20px;color:#4a4a4a;font-weight:normal;">=</div>
<svg class="a" style="left:1504px;top:334px" width="8" height="5" viewBox="0 0 8 5"><path d="M0 0H8L4 5Z" fill="#777"/></svg>
<div class="a" style="left:1517px;top:324px;width:79px;height:25px;background:#fff;"></div>
<div class="a " style="left:1606px;top:328.0px;font-size:15px;line-height:20px;color:#4a4a4a;font-weight:normal;">wie</div>
<svg class="a" style="left:1634px;top:334px" width="8" height="5" viewBox="0 0 8 5"><path d="M0 0H8L4 5Z" fill="#777"/></svg>
<div class="a" style="left:1648px;top:324px;width:85px;height:25px;background:#fff;"></div>
<div class="a" style="left:948px;top:354px;width:803px;height:558px;overflow:hidden;background:#fff">
<div class="a" style="left:0;top:1.10px;width:803px;height:27.07px;background:#fff;border-bottom:1px solid #e3e3e3"></div>
<div class="a" style="left:5px;top:4.63px;width:115px;overflow:hidden;font-size:15px;line-height:20px;color:#4a4a4a">000001</div>
<div class="a" style="left:128px;top:4.63px;width:151px;overflow:hidden;font-size:15px;line-height:20px;color:#4a4a4a">Abgasanlagen</div>
<div class="a" style="left:287px;top:4.63px;width:115px;overflow:hidden;font-size:15px;line-height:20px;color:#4a4a4a">AA 019</div>
<div class="a" style="left:410px;top:4.63px;width:116px;overflow:hidden;font-size:15px;line-height:20px;color:#4a4a4a">0029340</div>
<div class="a" style="left:529px;top:4.63px;width:118px;text-align:right;font-size:15px;line-height:20px;color:#4a4a4a">2009</div>
<div class="a" style="left:657px;top:4.63px;width:129px;overflow:hidden;font-size:15px;line-height:20px;color:#4a4a4a">Bausinger GmbH</div>
<div class="a" style="left:0;top:28.17px;width:803px;height:27.07px;background:#efefef;border-bottom:1px solid #e3e3e3"></div>
<div class="a" style="left:5px;top:31.70px;width:115px;overflow:hidden;font-size:15px;line-height:20px;color:#4a4a4a">000002</div>
<div class="a" style="left:128px;top:31.70px;width:151px;overflow:hidden;font-size:15px;line-height:20px;color:#4a4a4a">Brandmeldeanlage</div>
<div class="a" style="left:287px;top:31.70px;width:115px;overflow:hidden;font-size:15px;line-height:20px;color:#4a4a4a">FP-283</div>
<div class="a" style="left:410px;top:31.70px;width:116px;overflow:hidden;font-size:15px;line-height:20px;color:#4a4a4a">02499664</div>
<div class="a" style="left:657px;top:31.70px;width:129px;overflow:hidden;font-size:15px;line-height:20px;color:#4a4a4a">Bausinger GmbH</div>
<div class="a" style="left:0;top:55.24px;width:803px;height:27.07px;background:#fff;border-bottom:1px solid #e3e3e3"></div>
<div class="a" style="left:5px;top:58.78px;width:115px;overflow:hidden;font-size:15px;line-height:20px;color:#4a4a4a">RUE 07.05.01</div>
<div class="a" style="left:128px;top:58.78px;width:151px;overflow:hidden;font-size:15px;line-height:20px;color:#4a4a4a">Brandschutzklappen und</div>
<div class="a" style="left:529px;top:58.78px;width:118px;text-align:right;font-size:15px;line-height:20px;color:#4a4a4a">2012</div>
<div class="a" style="left:657px;top:58.78px;width:129px;overflow:hidden;font-size:15px;line-height:20px;color:#4a4a4a">AERMEC</div>
<div class="a" style="left:0;top:82.31px;width:803px;height:27.07px;background:#efefef;border-bottom:1px solid #e3e3e3"></div>
<div class="a" style="left:5px;top:85.84px;width:115px;overflow:hidden;font-size:15px;line-height:20px;color:#4a4a4a">000003</div>
<div class="a" style="left:128px;top:85.84px;width:151px;overflow:hidden;font-size:15px;line-height:20px;color:#4a4a4a">CO2-Löschanlage</div>
<div class="a" style="left:287px;top:85.84px;width:115px;overflow:hidden;font-size:15px;line-height:20px;color:#4a4a4a">FP-3001</div>
<div class="a" style="left:410px;top:85.84px;width:116px;overflow:hidden;font-size:15px;line-height:20px;color:#4a4a4a">2425</div>
<div class="a" style="left:657px;top:85.84px;width:129px;overflow:hidden;font-size:15px;line-height:20px;color:#4a4a4a">Bausinger GmbH</div>
<div class="a" style="left:0;top:109.38px;width:803px;height:27.07px;background:#fff;border-bottom:1px solid #e3e3e3"></div>
<div class="a" style="left:5px;top:112.91px;width:115px;overflow:hidden;font-size:15px;line-height:20px;color:#4a4a4a">000014</div>
<div class="a" style="left:128px;top:112.91px;width:151px;overflow:hidden;font-size:15px;line-height:20px;color:#4a4a4a">CO2-Löschanlage</div>
<div class="a" style="left:287px;top:112.91px;width:115px;overflow:hidden;font-size:15px;line-height:20px;color:#4a4a4a">FP-3001</div>
<div class="a" style="left:410px;top:112.91px;width:116px;overflow:hidden;font-size:15px;line-height:20px;color:#4a4a4a">5523778</div>
<div class="a" style="left:657px;top:112.91px;width:129px;overflow:hidden;font-size:15px;line-height:20px;color:#4a4a4a">Bausinger GmbH</div>
<div class="a" style="left:0;top:136.45px;width:803px;height:27.07px;background:#efefef;border-bottom:1px solid #e3e3e3"></div>
<div class="a" style="left:5px;top:139.98px;width:115px;overflow:hidden;font-size:15px;line-height:20px;color:#4a4a4a">000004</div>
<div class="a" style="left:128px;top:139.98px;width:151px;overflow:hidden;font-size:15px;line-height:20px;color:#4a4a4a">Datenübertragungseinrichtung</div>
<div class="a" style="left:287px;top:139.98px;width:115px;overflow:hidden;font-size:15px;line-height:20px;color:#4a4a4a">Data S245</div>
<div class="a" style="left:410px;top:139.98px;width:116px;overflow:hidden;font-size:15px;line-height:20px;color:#4a4a4a">8823859</div>
<div class="a" style="left:529px;top:139.98px;width:118px;text-align:right;font-size:15px;line-height:20px;color:#4a4a4a">2013</div>
<div class="a" style="left:657px;top:139.98px;width:129px;overflow:hidden;font-size:15px;line-height:20px;color:#4a4a4a">VEINLAND GmbH</div>
<div class="a" style="left:0;top:163.52px;width:803px;height:27.07px;background:#fff;border-bottom:1px solid #e3e3e3"></div>
<div class="a" style="left:5px;top:167.06px;width:115px;overflow:hidden;font-size:15px;line-height:20px;color:#4a4a4a">000005</div>
<div class="a" style="left:128px;top:167.06px;width:151px;overflow:hidden;font-size:15px;line-height:20px;color:#4a4a4a">Einbruchmeldeanlage</div>
<div class="a" style="left:287px;top:167.06px;width:115px;overflow:hidden;font-size:15px;line-height:20px;color:#4a4a4a">ELT 0212</div>
<div class="a" style="left:410px;top:167.06px;width:116px;overflow:hidden;font-size:15px;line-height:20px;color:#4a4a4a">1299106</div>
<div class="a" style="left:657px;top:167.06px;width:129px;overflow:hidden;font-size:15px;line-height:20px;color:#4a4a4a">Allweiler GmbH</div>
<div class="a" style="left:0;top:190.59px;width:803px;height:27.07px;background:#efefef;border-bottom:1px solid #e3e3e3"></div>
<div class="a" style="left:5px;top:194.12px;width:115px;overflow:hidden;font-size:15px;line-height:20px;color:#4a4a4a">RUE 07.02.02</div>
<div class="a" style="left:128px;top:194.12px;width:151px;overflow:hidden;font-size:15px;line-height:20px;color:#4a4a4a">Elektro-Luftentfeuchter</div>
<div class="a" style="left:410px;top:194.12px;width:116px;overflow:hidden;font-size:15px;line-height:20px;color:#4a4a4a">L060-A2013</div>
<div class="a" style="left:529px;top:194.12px;width:118px;text-align:right;font-size:15px;line-height:20px;color:#4a4a4a">2012</div>
<div class="a" style="left:657px;top:194.12px;width:129px;overflow:hidden;font-size:15px;line-height:20px;color:#4a4a4a">AERMEC</div>
<div class="a" style="left:0;top:217.66px;width:803px;height:27.07px;background:#fff;border-bottom:1px solid #e3e3e3"></div>
<div class="a" style="left:5px;top:221.19px;width:115px;overflow:hidden;font-size:15px;line-height:20px;color:#4a4a4a">RUE 07.02.01</div>
<div class="a" style="left:128px;top:221.19px;width:151px;overflow:hidden;font-size:15px;line-height:20px;color:#4a4a4a">Elektro-Lufterhitzer</div>
<div class="a" style="left:529px;top:221.19px;width:118px;text-align:right;font-size:15px;line-height:20px;color:#4a4a4a">2012</div>
<div class="a" style="left:657px;top:221.19px;width:129px;overflow:hidden;font-size:15px;line-height:20px;color:#4a4a4a">AERMEC</div>
<div class="a" style="left:0;top:244.73px;width:803px;height:27.07px;background:#efefef;border-bottom:1px solid #e3e3e3"></div>
<div class="a" style="left:5px;top:248.26px;width:115px;overflow:hidden;font-size:15px;line-height:20px;color:#4a4a4a">000006</div>
<div class="a" style="left:128px;top:248.26px;width:151px;overflow:hidden;font-size:15px;line-height:20px;color:#4a4a4a">Ersatzstromversorgung</div>
<div class="a" style="left:287px;top:248.26px;width:115px;overflow:hidden;font-size:15px;line-height:20px;color:#4a4a4a">ESV 203</div>
<div class="a" style="left:410px;top:248.26px;width:116px;overflow:hidden;font-size:15px;line-height:20px;color:#4a4a4a">23456772</div>
<div class="a" style="left:529px;top:248.26px;width:118px;text-align:right;font-size:15px;line-height:20px;color:#4a4a4a">2010</div>
<div class="a" style="left:657px;top:248.26px;width:129px;overflow:hidden;font-size:15px;line-height:20px;color:#4a4a4a">Scheftner AG</div>
<div class="a" style="left:0;top:271.80px;width:803px;height:27.07px;background:#fff;border-bottom:1px solid #e3e3e3"></div>
<div class="a" style="left:5px;top:275.34px;width:115px;overflow:hidden;font-size:15px;line-height:20px;color:#4a4a4a">000007</div>
<div class="a" style="left:128px;top:275.34px;width:151px;overflow:hidden;font-size:15px;line-height:20px;color:#4a4a4a">Fahrtreppe</div>
<div class="a" style="left:287px;top:275.34px;width:115px;overflow:hidden;font-size:15px;line-height:20px;color:#4a4a4a">Easy Go 152</div>
<div class="a" style="left:410px;top:275.34px;width:116px;overflow:hidden;font-size:15px;line-height:20px;color:#4a4a4a">145116</div>
<div class="a" style="left:529px;top:275.34px;width:118px;text-align:right;font-size:15px;line-height:20px;color:#4a4a4a">2010</div>
<div class="a" style="left:657px;top:275.34px;width:129px;overflow:hidden;font-size:15px;line-height:20px;color:#4a4a4a">Haushahn</div>
<div class="a" style="left:0;top:298.87px;width:803px;height:27.07px;background:#efefef;border-bottom:1px solid #e3e3e3"></div>
<div class="a" style="left:5px;top:302.41px;width:115px;overflow:hidden;font-size:15px;line-height:20px;color:#4a4a4a">000008</div>
<div class="a" style="left:128px;top:302.41px;width:151px;overflow:hidden;font-size:15px;line-height:20px;color:#4a4a4a">Gasversorgungsanlage</div>
<div class="a" style="left:287px;top:302.41px;width:115px;overflow:hidden;font-size:15px;line-height:20px;color:#4a4a4a">GA 30</div>
<div class="a" style="left:410px;top:302.41px;width:116px;overflow:hidden;font-size:15px;line-height:20px;color:#4a4a4a">156345674</div>
<div class="a" style="left:657px;top:302.41px;width:129px;overflow:hidden;font-size:15px;line-height:20px;color:#4a4a4a">Allweiler GmbH</div>
<div class="a" style="left:0;top:325.94px;width:803px;height:27.07px;background:#fff;border-bottom:1px solid #e3e3e3"></div>
<div class="a" style="left:5px;top:329.48px;width:115px;overflow:hidden;font-size:15px;line-height:20px;color:#4a4a4a">000009</div>
<div class="a" style="left:128px;top:329.48px;width:151px;overflow:hidden;font-size:15px;line-height:20px;color:#4a4a4a">Getriebe</div>
<div class="a" style="left:287px;top:329.48px;width:115px;overflow:hidden;font-size:15px;line-height:20px;color:#4a4a4a">RDF-2003</div>
<div class="a" style="left:410px;top:329.48px;width:116px;overflow:hidden;font-size:15px;line-height:20px;color:#4a4a4a">26272889</div>
<div class="a" style="left:529px;top:329.48px;width:118px;text-align:right;font-size:15px;line-height:20px;color:#4a4a4a">2010</div>
<div class="a" style="left:657px;top:329.48px;width:129px;overflow:hidden;font-size:15px;line-height:20px;color:#4a4a4a">G &amp; L&nbsp; GmbH</div>
<div class="a" style="left:0;top:353.01px;width:803px;height:27.07px;background:#5a8ebf;border-bottom:1px solid #e3e3e3"></div>
<div class="a" style="left:5px;top:356.55px;width:115px;overflow:hidden;font-size:15px;line-height:20px;color:#fff">000010</div>
<div class="a" style="left:128px;top:356.55px;width:151px;overflow:hidden;font-size:15px;line-height:20px;color:#fff">Heizanlage</div>
<div class="a" style="left:287px;top:356.55px;width:115px;overflow:hidden;font-size:15px;line-height:20px;color:#fff">Z-020</div>
<div class="a" style="left:410px;top:356.55px;width:116px;overflow:hidden;font-size:15px;line-height:20px;color:#fff">2572788</div>
<div class="a" style="left:529px;top:356.55px;width:118px;text-align:right;font-size:15px;line-height:20px;color:#fff">2009</div>
<div class="a" style="left:657px;top:356.55px;width:129px;overflow:hidden;font-size:15px;line-height:20px;color:#fff">Allweiler GmbH</div>
<div class="a" style="left:0;top:380.08px;width:803px;height:27.07px;background:#fff;border-bottom:1px solid #e3e3e3"></div>
<div class="a" style="left:5px;top:383.62px;width:115px;overflow:hidden;font-size:15px;line-height:20px;color:#4a4a4a">RUE 07.00.00</div>
<div class="a" style="left:128px;top:383.62px;width:151px;overflow:hidden;font-size:15px;line-height:20px;color:#4a4a4a">Klimaanlage Gebäude</div>
<div class="a" style="left:529px;top:383.62px;width:118px;text-align:right;font-size:15px;line-height:20px;color:#4a4a4a">2012</div>
<div class="a" style="left:657px;top:383.62px;width:129px;overflow:hidden;font-size:15px;line-height:20px;color:#4a4a4a">AERMEC</div>
<div class="a" style="left:0;top:407.15px;width:803px;height:27.07px;background:#efefef;border-bottom:1px solid #e3e3e3"></div>
<div class="a" style="left:5px;top:410.69px;width:115px;overflow:hidden;font-size:15px;line-height:20px;color:#4a4a4a">RUE 07.04.00</div>
<div class="a" style="left:128px;top:410.69px;width:151px;overflow:hidden;font-size:15px;line-height:20px;color:#4a4a4a">Luftbefeuchter</div>
<div class="a" style="left:529px;top:410.69px;width:118px;text-align:right;font-size:15px;line-height:20px;color:#4a4a4a">2012</div>
<div class="a" style="left:657px;top:410.69px;width:129px;overflow:hidden;font-size:15px;line-height:20px;color:#4a4a4a">AERMEC</div>
<div class="a" style="left:0;top:434.22px;width:803px;height:27.07px;background:#fff;border-bottom:1px solid #e3e3e3"></div>
<div class="a" style="left:5px;top:437.76px;width:115px;overflow:hidden;font-size:15px;line-height:20px;color:#4a4a4a">RUE 07.03.00</div>
<div class="a" style="left:128px;top:437.76px;width:151px;overflow:hidden;font-size:15px;line-height:20px;color:#4a4a4a">Luftfilter</div>
<div class="a" style="left:529px;top:437.76px;width:118px;text-align:right;font-size:15px;line-height:20px;color:#4a4a4a">2012</div>
<div class="a" style="left:657px;top:437.76px;width:129px;overflow:hidden;font-size:15px;line-height:20px;color:#4a4a4a">AERMEC</div>
<div class="a" style="left:0;top:461.29px;width:803px;height:27.07px;background:#efefef;border-bottom:1px solid #e3e3e3"></div>
<div class="a" style="left:5px;top:464.83px;width:115px;overflow:hidden;font-size:15px;line-height:20px;color:#4a4a4a">RUE 07.01.00</div>
<div class="a" style="left:128px;top:464.83px;width:151px;overflow:hidden;font-size:15px;line-height:20px;color:#4a4a4a">Luftfördereinrichtung</div>
<div class="a" style="left:529px;top:464.83px;width:118px;text-align:right;font-size:15px;line-height:20px;color:#4a4a4a">2012</div>
<div class="a" style="left:657px;top:464.83px;width:129px;overflow:hidden;font-size:15px;line-height:20px;color:#4a4a4a">AERMEC</div>
<div class="a" style="left:0;top:488.36px;width:803px;height:27.07px;background:#fff;border-bottom:1px solid #e3e3e3"></div>
<div class="a" style="left:5px;top:491.90px;width:115px;overflow:hidden;font-size:15px;line-height:20px;color:#4a4a4a">RUE 07.05.02</div>
<div class="a" style="left:128px;top:491.90px;width:151px;overflow:hidden;font-size:15px;line-height:20px;color:#4a4a4a">Luftkanäle</div>
<div class="a" style="left:529px;top:491.90px;width:118px;text-align:right;font-size:15px;line-height:20px;color:#4a4a4a">2012</div>
<div class="a" style="left:657px;top:491.90px;width:129px;overflow:hidden;font-size:15px;line-height:20px;color:#4a4a4a">AERMEC</div>
<div class="a" style="left:0;top:515.43px;width:803px;height:27.07px;background:#efefef;border-bottom:1px solid #e3e3e3"></div>
<div class="a" style="left:5px;top:518.97px;width:115px;overflow:hidden;font-size:15px;line-height:20px;color:#4a4a4a">RUE 07.05.00</div>
<div class="a" style="left:128px;top:518.97px;width:151px;overflow:hidden;font-size:15px;line-height:20px;color:#4a4a4a">Luftverteilungselement</div>
<div class="a" style="left:529px;top:518.97px;width:118px;text-align:right;font-size:15px;line-height:20px;color:#4a4a4a">2012</div>
<div class="a" style="left:657px;top:518.97px;width:129px;overflow:hidden;font-size:15px;line-height:20px;color:#4a4a4a">AERMEC</div>
<div class="a" style="left:0;top:542.50px;width:803px;height:27.07px;background:#fff;border-bottom:1px solid #e3e3e3"></div>
<div class="a" style="left:5px;top:546.03px;width:115px;overflow:hidden;font-size:15px;line-height:20px;color:#4a4a4a">000011</div>
<div class="a" style="left:128px;top:546.03px;width:151px;overflow:hidden;font-size:15px;line-height:20px;color:#4a4a4a">Motor</div>
<div class="a" style="left:287px;top:546.03px;width:115px;overflow:hidden;font-size:15px;line-height:20px;color:#4a4a4a">ID1516-M1</div>
<div class="a" style="left:410px;top:546.03px;width:116px;overflow:hidden;font-size:15px;line-height:20px;color:#4a4a4a">2354784</div>
<div class="a" style="left:123px;top:0;width:1px;height:560px;background:#e0e0e0"></div>
<div class="a" style="left:282px;top:0;width:1px;height:560px;background:#e0e0e0"></div>
<div class="a" style="left:405px;top:0;width:1px;height:560px;background:#e0e0e0"></div>
<div class="a" style="left:529px;top:0;width:1px;height:560px;background:#e0e0e0"></div>
<div class="a" style="left:652px;top:0;width:1px;height:560px;background:#e0e0e0"></div>
<div class="a" style="left:789px;top:0;width:1px;height:560px;background:#e0e0e0"></div>
</div>
<div class="a" style="left:1751px;top:282px;width:24px;height:632px;background:#fff;"></div>
<div class="a" style="left:948px;top:912px;width:803px;height:2px;background:#fff;"></div>
<svg class="a" style="left:1756px;top:290px" width="12" height="7" viewBox="0 0 12 7"><path d="M0 7H12L6 0Z" fill="#777"/></svg>
<div class="a" style="left:1757px;top:304px;width:11px;height:402px;background:#a9a9a9;"></div>
<svg class="a" style="left:1756px;top:898px" width="12" height="7" viewBox="0 0 12 7"><path d="M0 0H12L6 7Z" fill="#777"/></svg>
<div class="a" style="left:948px;top:914px;width:827px;height:1px;background:#c8c8c8;"></div>
<svg class="a" style="left:1235px;top:926px" width="20" height="20" viewBox="0 0 20 20"><circle cx="10" cy="10" r="9.2" fill="#fff" stroke="#b0b0b0" stroke-width="1.3"/><path d="M7 6V14M12.5 6.5L9 10L12.5 13.5" fill="none" stroke="#6f9bc8" stroke-width="1.4"/></svg>
<svg class="a" style="left:1270px;top:926px" width="20" height="20" viewBox="0 0 20 20"><circle cx="10" cy="10" r="9.2" fill="#fff" stroke="#b0b0b0" stroke-width="1.3"/><path d="M11.5 6.5L8 10L11.5 13.5" fill="none" stroke="#6f9bc8" stroke-width="1.5"/></svg>
<div class="a" style="left:1206.0px;top:927.0px;width:200px;text-align:center;font-size:15px;line-height:20px;color:#3a3a3a;font-weight:normal;-webkit-text-stroke:0.3px #3a3a3a">1</div>
<div class="a" style="left:1228.5px;top:927.0px;width:200px;text-align:center;font-size:15px;line-height:20px;color:#3a3a3a;font-weight:normal;-webkit-text-stroke:0.3px #3a3a3a">-</div>
<div class="a" style="left:1256.0px;top:927.0px;width:200px;text-align:center;font-size:15px;line-height:20px;color:#3a3a3a;font-weight:normal;-webkit-text-stroke:0.3px #3a3a3a">30</div>
<div class="a" style="left:1283.0px;top:927.0px;width:200px;text-align:center;font-size:15px;line-height:20px;color:#3a3a3a;font-weight:normal;-webkit-text-stroke:0.3px #3a3a3a">/</div>
<div class="a" style="left:1312.0px;top:927.0px;width:200px;text-align:center;font-size:15px;line-height:20px;color:#3a3a3a;font-weight:normal;-webkit-text-stroke:0.3px #3a3a3a">40</div>
<svg class="a" style="left:1433px;top:926px" width="20" height="20" viewBox="0 0 20 20"><circle cx="10" cy="10" r="9.2" fill="#fff" stroke="#b0b0b0" stroke-width="1.3"/><path d="M8.5 6.5L12 10L8.5 13.5" fill="none" stroke="#6f9bc8" stroke-width="1.4"/></svg>
<svg class="a" style="left:1468px;top:926px" width="20" height="20" viewBox="0 0 20 20"><circle cx="10" cy="10" r="9.2" fill="#fff" stroke="#b0b0b0" stroke-width="1.3"/><path d="M13 6V14M7.5 6.5L11 10L7.5 13.5" fill="none" stroke="#6f9bc8" stroke-width="1.4"/></svg>
<div class="a" style="left:1776px;top:210px;width:34px;height:749px;background:#eeeeee;"></div>
<div class="a" style="left:1781px;top:295px;transform-origin:0 0;transform:rotate(-90deg);font-size:15px;line-height:20px;color:#444">Dokumente</div>
<svg class="a" style="left:1784px;top:304px" width="15" height="13" viewBox="0 0 15 13"><path d="M1 2H7V11H1Z" fill="#fff" stroke="#999"/><path d="M7 6.5H14" stroke="#999" stroke-width="1.2"/></svg>
<div class="a" style="left:1781px;top:368px;transform-origin:0 0;transform:rotate(-90deg);font-size:15px;line-height:20px;color:#444">CAD</div>
<svg class="a" style="left:1784px;top:375px" width="16" height="17" viewBox="0 0 16 17"><rect x="0.5" y="7.5" width="15" height="9" fill="#fff" stroke="#999"/><path d="M3 8V11M6 8V10M9 8V11M12 8V10" stroke="#999"/><rect x="3" y="0.5" width="10" height="4" fill="#b9cfe3" stroke="#999"/></svg>
<div class="a" style="left:1804px;top:211px;width:4px;height:114px;background:#b0b0b0;"></div>
<div class="a" style="left:1804px;top:329px;width:4px;height:69px;background:#b0b0b0;"></div>
<div class="a" style="left:10px;top:959px;width:1800px;height:31px;background:#eeeeee;border:1px solid #cfcfcf"></div>
<svg class="a" style="left:14px;top:965px" width="19" height="20" viewBox="0 0 19 20"><circle cx="9.5" cy="5.5" r="4.5" fill="#fff" stroke="#999" stroke-width="1.2"/><path d="M1 19Q1 11 9.5 11Q18 11 18 19Z" fill="#b9cfe3" stroke="#999" stroke-width="1.2"/></svg>
<div class="a " style="left:33px;top:965.5px;font-size:15px;line-height:20px;color:#4a4a4a;font-weight:normal;">Musterkunde -</div>
<svg class="a" style="left:133px;top:965px" width="20" height="20" viewBox="0 0 20 20"><circle cx="10" cy="10" r="9" fill="#fff" stroke="#aaa" stroke-width="1.2"/><path d="M9 5V11H14" fill="none" stroke="#3d74ad" stroke-width="1.4"/></svg>
<div class="a " style="left:152.5px;top:965.5px;font-size:15px;line-height:20px;color:#4a4a4a;font-weight:normal;">Europe/Berlin -</div>
<svg class="a" style="left:255px;top:965px" width="19" height="20" viewBox="0 0 19 20"><circle cx="9.5" cy="5.5" r="4.5" fill="#fff" stroke="#999" stroke-width="1.2"/><path d="M1 19Q1 11 9.5 11Q18 11 18 19Z" fill="#b9cfe3" stroke="#999" stroke-width="1.2"/></svg>
<div class="a " style="left:275px;top:965.5px;font-size:15px;line-height:20px;color:#4a4a4a;font-weight:normal;">Supervisor</div>
<svg class="a" style="left:373px;top:965px" width="19" height="20" viewBox="0 0 19 20"><rect x="0.5" y="0.5" width="18" height="19" fill="#fff" stroke="#aaa"/><rect x="3.5" y="8" width="10" height="11.5" fill="#b5cde2" stroke="#999" stroke-width="0.8"/><path d="M8.5 8V19.5" stroke="#999" stroke-width="0.8"/><path d="M6 4.5H11" stroke="#999"/></svg>
<div class="a " style="left:397px;top:965.5px;font-size:15px;line-height:20px;color:#4a4a4a;font-weight:normal;">Anlage</div>
<div class="a" style="left:1523px;top:964px;width:1.5px;height:22px;background:#aaa;"></div>
<svg class="a" style="left:1532px;top:966px" width="19" height="18" viewBox="0 0 19 18"><rect x="0.6" y="0.6" width="17.8" height="16.8" fill="#fff" stroke="#888" stroke-width="1.1"/><rect x="1.2" y="1.2" width="16.6" height="3" fill="#b9cfe3"/><path d="M1 5.5H18M1 11H18M9 5.5V11" stroke="#888" stroke-width="1"/></svg>
<div class="a" style="left:1558px;top:965px;width:25px;height:19px;background:#5a8ebf;"></div>
<svg class="a" style="left:1563px;top:966px" width="15" height="17" viewBox="0 0 15 17"><path d="M1 1H10L14 5V16H1Z" fill="#fff" stroke="#666" stroke-width="0.8"/><path d="M4 7H10M4 9.5H10M4 12H10" stroke="#8aa8c8" stroke-width="1.2"/></svg>
<div class="a" style="left:1585px;top:965px;width:24px;height:19px;background:#5a8ebf;"></div>
<svg class="a" style="left:1589px;top:966px" width="17" height="17" viewBox="0 0 17 17"><rect x="0.5" y="0.5" width="5" height="16" fill="#ddd" stroke="#666"/><path d="M1 3.5H3.5M1 6.5H3M1 9.5H3.5M1 12.5H3" stroke="#666" stroke-width="0.8"/><rect x="10" y="4" width="3.5" height="12.5" fill="#fff" stroke="#666" stroke-width="0.9"/><circle cx="11.75" cy="2" r="1.5" fill="#fff" stroke="#666" stroke-width="0.8"/></svg>
<div class="a" style="left:1610px;top:965px;width:25px;height:19px;background:#5a8ebf;"></div>
<svg class="a" style="left:1614px;top:966px" width="17" height="17" viewBox="0 0 17 17"><path d="M1 7L16 1L10 16L8.5 9Z" fill="#fff" stroke="#fff" stroke-width="0.8" stroke-linejoin="round"/></svg>
<svg class="a" style="left:1638px;top:965px" width="21" height="21" viewBox="0 0 21 21"><circle cx="10.5" cy="10" r="9.3" fill="#fff" stroke="#aaa" stroke-width="1.2"/><text x="10.5" y="14.5" font-size="13" text-anchor="middle" fill="#3d74ad" font-family="Liberation Sans">€</text></svg>
<svg class="a" style="left:1664px;top:965px" width="21" height="21" viewBox="0 0 21 21"><circle cx="10.5" cy="10" r="9.3" fill="#fff" stroke="#aaa" stroke-width="1.2"/><path d="M9.5 5V11H15" fill="none" stroke="#3d74ad" stroke-width="1.4"/></svg>
<div class="a" style="left:1694px;top:964px;width:1.5px;height:22px;background:#aaa;"></div>
<div class="a" style="left:1709px;top:977px;width:7px;height:1.5px;background:#4a4a4a;"></div>
<div class="a " style="left:1734px;top:965.5px;font-size:14.5px;line-height:20px;color:#4a4a4a;font-weight:normal;">100 %</div>
<div class="a " style="left:1789px;top:966.0px;font-size:15px;line-height:20px;color:#4a4a4a;font-weight:normal;">+</div>
<div class="a" style="left:4px;top:990px;width:1812px;height:5px;background:#d5dfe9;"></div>
<div class="a" style="left:0px;top:995px;width:1820px;height:3px;background:#41577a;"></div>
<div class="a" style="left:0px;top:998px;width:1820px;height:24px;background:#eeeeee;"></div>
<div class="a " style="left:4px;top:1004.0px;font-size:11px;line-height:14px;color:#4a4a4a;font-weight:normal;">Online-Betrieb</div>
<div class="a" style="left:1656px;top:1002px;width:1px;height:18px;background:#bbb;"></div>
<svg class="a" style="left:1662px;top:1004px" width="18" height="14" viewBox="0 0 18 14"><rect x="0.5" y="0.5" width="17" height="13" fill="#fff" stroke="#777"/><path d="M1 4.5H17M1 9H17M7 4.5V13" stroke="#777"/></svg>
<svg class="a" style="left:1689px;top:1003px" width="17" height="17" viewBox="0 0 17 17"><path d="M9 9L16 16" stroke="#888" stroke-width="2.5" stroke-linecap="round"/><path d="M1 7L7 1L10 4.5Q9 8 4 10Z" fill="#ccc" stroke="#888" stroke-linejoin="round"/></svg>
<svg class="a" style="left:1714px;top:1002px" width="12" height="18" viewBox="0 0 12 18"><path d="M1 1H11V17L6 13L1 17Z" fill="#fff" stroke="#888"/><path d="M6 4.5L7 6.5L9 6.7L7.5 8L8 10L6 9L4 10L4.5 8L3 6.7L5 6.5Z" fill="#f0d070" stroke="#aa8a40" stroke-width="0.5"/></svg>
<div class="a " style="left:1740px;top:1004.5px;font-size:12px;line-height:14px;color:#4a4a4a;font-weight:normal;">-</div>
<div class="a " style="left:1761px;top:1004.5px;font-size:12px;line-height:14px;color:#4a4a4a;font-weight:normal;">130 %</div>
<div class="a " style="left:1803px;top:1004.5px;font-size:13px;line-height:14px;color:#4a4a4a;font-weight:normal;">+</div>
<div class="a" style="left:0px;top:1022px;width:45px;height:2px;background:#333;"></div>
<div class="a" style="left:370px;top:1022px;width:1450px;height:2px;background:#333;"></div>
</body></html>
